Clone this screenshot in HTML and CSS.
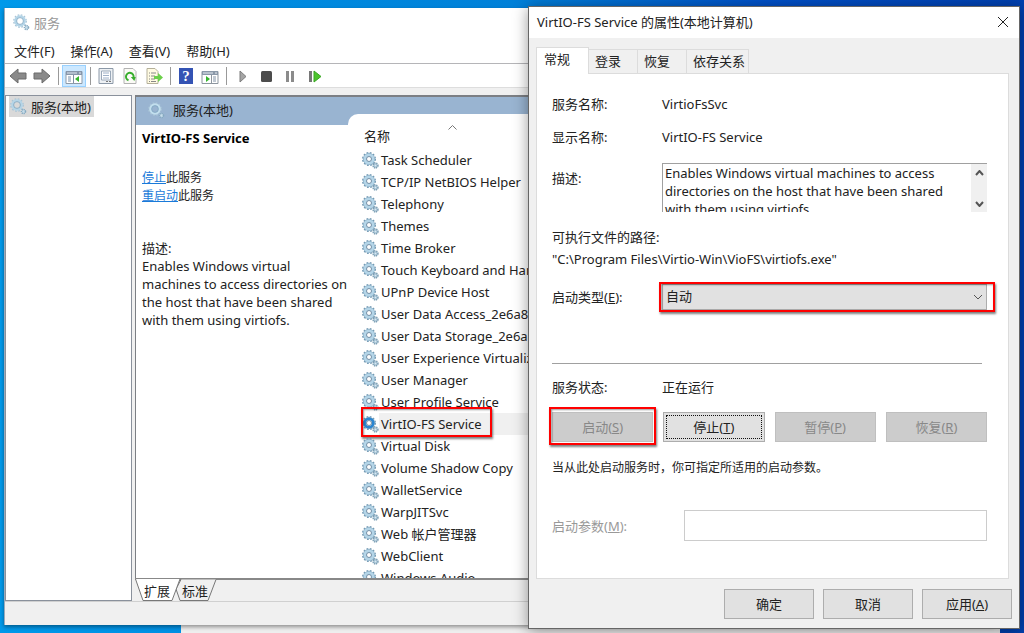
FILE: index.html
```
<!DOCTYPE html>
<html lang="zh-CN">

<head>
    <meta charset="UTF-8">
    <meta name="viewport" content="width=device-width, initial-scale=1.0">
    <title>服务</title>
    <link rel="stylesheet" href="styles.css">
</head>

<body>
    <!-- shared icons -->
    <svg class="sprite" aria-hidden="true">
        <symbol id="gear" viewBox="0 0 17 17">
            <circle cx="7" cy="7" r="6.3" fill="none" stroke="#7399b3" stroke-width="1.4" stroke-dasharray="1.8 1.5" />
            <circle cx="7" cy="7" r="4.5" fill="none" stroke="#7fa6bf" stroke-width="3" />
            <circle cx="7" cy="7" r="4.2" fill="none" stroke="currentColor" stroke-width="2.6" />
            <circle cx="7" cy="7" r="2.5" fill="#fff" stroke="#5c7f9c" stroke-width=".9" />
            <circle cx="13.500" cy="13.500" r="2.4" fill="none" stroke="#7c9fb5" stroke-width="1.6" stroke-dasharray="1.2 .6" />
            <circle cx="13.500" cy="13.500" r="1.4" fill="#d9e9f3" stroke="#8fb2c8" stroke-width="1" />
        </symbol>
        <symbol id="gear-pale" viewBox="0 0 17 17">
            <circle cx="7" cy="7" r="6.2" fill="none" stroke="#a8c4d6" stroke-width="1.4" stroke-dasharray="1.7 1.55" />
            <circle cx="7" cy="7" r="4.6" fill="none" stroke="currentColor" stroke-width="2.4" />
            <circle cx="7" cy="7" r="3.4" fill="none" stroke="#7fa6c0" stroke-width=".8" />
            <circle cx="13.500" cy="13.500" r="2" fill="#c9dfec" stroke="#85a9c0" stroke-width="1.6" stroke-dasharray="1.1 .6" />
        </symbol>
    </svg>

    <div class="desktop">
        <div class="back-window"></div>

        <div class="window services">
            <div class="title-bar">
                <svg class="gear"><use href="#gear-pale" /></svg>
                <span>服务</span>
            </div>
            <div class="menu-bar">
                <button>文件(F)</button>
                <button>操作(A)</button>
                <button>查看(V)</button>
                <button>帮助(H)</button>
            </div>
            <div class="toolbar">
                <button aria-label="后退"><svg viewBox="0 0 18 16"><path d="M1 8l8-7v4h8v6H9v4z" fill="#8a8a8a" stroke="#6a6a6a" /></svg></button>
                <button aria-label="前进"><svg viewBox="0 0 18 16"><path d="M17 8L9 1v4H1v6h8v4z" fill="#8a8a8a" stroke="#6a6a6a" /></svg></button>
                <i class="sep"></i>
                <button class="pressed" aria-label="显示控制台树">
                    <svg viewBox="0 0 18 16"><path d="M1 3.500h16v12H1z" fill="#fff" stroke="#8d9aa8" /><path d="M1 3h16v4H1z" fill="#8796aa" /><path d="M2 5h10M14 5h2" stroke="#dfe7f0" /><path d="M3 9h3M3 11h3M3 13h3" stroke="#7890aa" /><path d="M8.500 7v8" stroke="#8090a4" /><path d="M14 8v6l-4-3z" fill="#35b52c" /></svg>
                </button>
                <i class="sep"></i>
                <button aria-label="属性">
                    <svg viewBox="0 0 18 16"><path d="M2 .5h14v15H2z" fill="#eef1f4" stroke="#8c99a8" /><path d="M4.500 3h9v9h-9z" fill="#fff" stroke="#9aa8b8" /><path d="M6 5h6M6 7.500h6M6 10h6" stroke="#9fb1c8" /><path d="M9 13.500h2M12 13.500h2" stroke="#777" /></svg>
                </button>
                <button aria-label="刷新">
                    <svg viewBox="0 0 18 16"><path d="M3 .5h9l3 3v12H3z" fill="#fbfbf6" stroke="#b2b2b2" /><path d="M7.500 12.200A3.800 3.800 0 1 1 12.500 9.500" fill="none" stroke="#38ae2d" stroke-width="2" /><path d="M9.800 9h5l-1.500 4z" fill="#38ae2d" /></svg>
                </button>
                <button aria-label="导出列表">
                    <svg viewBox="0 0 18 16"><path d="M2 .5h8l3 3v12H2z" fill="#fffbe2" stroke="#b5b09a" /><path d="M4 5h1M6 5h5M4 8h1M6 8h4M4 11h1M6 11h4M4 13.500h1M6 13.500h5" stroke="#888" /><path d="M9 8h4V5l5 4.500-5 4.500v-3H9z" fill="#6cd04a" /></svg>
                </button>
                <i class="sep"></i>
                <button aria-label="帮助" class="help"><span>?</span></button>
                <button aria-label="操作窗格">
                    <svg viewBox="0 0 18 16"><path d="M1 3.500h16v12H1z" fill="#fff" stroke="#8d969f" /><path d="M1 3h16v4H1z" fill="#8a98a8" /><path d="M2 5h10M14 5h2" stroke="#e7edf3" /><path d="M12 9h3M12 11h3M12 13h3" stroke="#8293a6" /><path d="M10.500 7v8" stroke="#8d969f" /><path d="M5 8v6l4-3z" fill="#35b52c" /></svg>
                </button>
                <i class="sep"></i>
                <button aria-label="启动服务"><svg viewBox="0 0 18 16"><path d="M7 3v11l6-5.500z" fill="#a5a5a5" stroke="#7d7d7d" /></svg></button>
                <button aria-label="停止服务"><svg viewBox="0 0 18 16"><rect x="4" y="3" width="11" height="11" rx="1.500" fill="#4c4c4c" /></svg></button>
                <button aria-label="暂停服务"><svg viewBox="0 0 18 16"><path d="M5 3h3v11H5zM10 3h3v11h-3z" fill="#8b8b8b" /></svg></button>
                <button aria-label="重启动服务"><svg viewBox="0 0 18 16"><path d="M4 3h3v11H4z" fill="#777" /><path d="M9 3v11l7-5.500z" fill="#4cc42c" stroke="#38a522" /></svg></button>
            </div>

            <div class="panes">
                <div class="tree">
                    <div class="tree-item"><svg class="gear"><use href="#gear-pale" /></svg><span>服务(本地)</span></div>
                </div>
                <div class="detail">
                    <div class="detail-head"><svg class="gear"><use href="#gear-pale" /></svg><span>服务(本地)</span></div>
                    <div class="detail-body">
                        <div class="info">
                            <h2>VirtIO-FS Service</h2>
                            <p class="links"><a href="#">停止</a>此服务<br><a href="#">重启动</a>此服务</p>
                            <p class="about">描述:<br>Enables Windows virtual machines to access directories on the host that have been shared with them using virtiofs.</p>
                        </div>
                        <div class="list">
                            <div class="list-head">名称<svg class="sort" viewBox="0 0 9 5"><path d="M.5 4.500l4-4 4 4" /></svg></div>
                            <ul>
                                <li><svg class="gear"><use href="#gear" /></svg><span>Task Scheduler</span></li>
                                <li><svg class="gear"><use href="#gear" /></svg><span>TCP/IP NetBIOS Helper</span></li>
                                <li><svg class="gear"><use href="#gear" /></svg><span>Telephony</span></li>
                                <li><svg class="gear"><use href="#gear" /></svg><span>Themes</span></li>
                                <li><svg class="gear"><use href="#gear" /></svg><span>Time Broker</span></li>
                                <li><svg class="gear"><use href="#gear" /></svg><span>Touch Keyboard and Handwriting Panel Service</span></li>
                                <li><svg class="gear"><use href="#gear" /></svg><span>UPnP Device Host</span></li>
                                <li><svg class="gear"><use href="#gear" /></svg><span>User Data Access_2e6a8</span></li>
                                <li><svg class="gear"><use href="#gear" /></svg><span>User Data Storage_2e6a8</span></li>
                                <li><svg class="gear"><use href="#gear" /></svg><span>User Experience Virtualization Service</span></li>
                                <li><svg class="gear"><use href="#gear" /></svg><span>User Manager</span></li>
                                <li><svg class="gear"><use href="#gear" /></svg><span>User Profile Service</span></li>
                                <li class="selected"><svg class="gear"><use href="#gear" /></svg><span>VirtIO-FS Service</span><i class="mark"></i></li>
                                <li><svg class="gear"><use href="#gear" /></svg><span>Virtual Disk</span></li>
                                <li><svg class="gear"><use href="#gear" /></svg><span>Volume Shadow Copy</span></li>
                                <li><svg class="gear"><use href="#gear" /></svg><span>WalletService</span></li>
                                <li><svg class="gear"><use href="#gear" /></svg><span>WarpJITSvc</span></li>
                                <li><svg class="gear"><use href="#gear" /></svg><span>Web 帐户管理器</span></li>
                                <li><svg class="gear"><use href="#gear" /></svg><span>WebClient</span></li>
                                <li><svg class="gear"><use href="#gear" /></svg><span>Windows Audio</span></li>
                            </ul>
                        </div>
                    </div>
                    <div class="view-tabs">
                        <svg viewBox="0 0 84 22" aria-hidden="true">
                            <path d="M46 .5L41 10l4 11.500h28L81 .5" fill="#f0f0f0" stroke="#777" />
                            <path d="M.5 0L8 21.500h29L45 0" fill="#fff" stroke="#777" />
                        </svg>
                        <button>扩展</button>
                        <button>标准</button>
                    </div>
                </div>
            </div>
            <div class="status-bar"></div>
        </div>

        <form class="window dialog">
            <div class="title-bar">
                <span>VirtIO-FS Service 的属性(本地计算机)</span>
                <button type="button" class="close" aria-label="关闭"><svg viewBox="0 0 12 12"><path d="M1 1l10 10M11 1L1 11" /></svg></button>
            </div>
            <div class="tabs">
                <button type="button" class="active">常规</button>
                <button type="button">登录</button>
                <button type="button">恢复</button>
                <button type="button" class="wide">依存关系</button>
            </div>
            <div class="page">
                <div class="row"><span>服务名称:</span><span>VirtioFsSvc</span></div>
                <div class="row"><span>显示名称:</span><span>VirtIO-FS Service</span></div>
                <div class="row desc-row">
                    <label for="desc">描述:</label>
                    <div class="desc">
                        <textarea id="desc" readonly>Enables Windows virtual machines to access directories on the host that have been shared with them using virtiofs.</textarea>
                        <div class="scroll">
                            <svg viewBox="0 0 9 6"><path d="M1 5l3.500-4L8 5" /></svg>
                            <svg viewBox="0 0 9 6"><path d="M1 1l3.500 4L8 1" /></svg>
                        </div>
                    </div>
                </div>
                <div class="path">可执行文件的路径:<br>"C:\Program Files\Virtio-Win\VioFS\virtiofs.exe"</div>
                <div class="row type-row">
                    <label for="type">启动类型(<u>E</u>):</label>
                    <div class="select">
                        <select id="type">
                            <option>自动</option>
                            <option>手动</option>
                            <option>禁用</option>
                        </select>
                        <svg viewBox="0 0 10 6"><path d="M1 1l4 4 4-4" /></svg>
                        <i class="mark"></i>
                    </div>
                </div>
                <hr>
                <div class="row"><span>服务状态:</span><span>正在运行</span></div>
                <div class="actions">
                    <div class="marked"><button type="button" disabled>启动(<u>S</u>)</button><i class="mark"></i></div>
                    <button type="button" class="focused">停止(<u>T</u>)</button>
                    <button type="button" disabled>暂停(<u>P</u>)</button>
                    <button type="button" disabled>恢复(<u>R</u>)</button>
                </div>
                <p>当从此处启动服务时，你可指定所适用的启动参数。</p>
                <div class="row param-row">
                    <label for="param">启动参数(<u>M</u>):</label>
                    <input type="text" id="param" disabled>
                </div>
            </div>
            <div class="footer">
                <button type="button">确定</button>
                <button type="button">取消</button>
                <button type="button">应用(<u>A</u>)</button>
            </div>
        </form>
    </div>
</body>

</html>
```
FILE: styles.css
```
* {
    box-sizing: border-box;
}

body {
    margin: 0;
    font-family: "Noto Sans", "Noto Sans CJK SC", sans-serif;
    font-size: 13px;
    line-height: 18px;
    color: #222;
}

button,
select,
input,
textarea {
    font: inherit;
    color: inherit;
}

button {
    padding: 0;
    border: none;
    background: none;
}

.sprite {
    display: none;
}

.gear {
    flex: none;
    width: 17px;
    height: 17px;
    color: #b4d5e8;
}

.desktop {
    position: relative;
    height: 100vh;
    overflow: hidden;
    background: linear-gradient(90deg, #0099ea 0%, #0080d8 50%, #0050c8 75%, #0040b0 100%);
}

.back-window {
    position: absolute;
    left: 181px;
    right: 24px;
    bottom: 0;
    height: 10px;
    background: #eee;
}

.window {
    position: absolute;
    display: flex;
    flex-direction: column;
}

/* services console */
.services {
    left: 4px;
    right: 30px;
    top: 8px;
    bottom: 8px;
    background: #f0f0f0;
    border-left: 1px solid #9ab;
    box-shadow: 0 2px 4px rgba(0, 0, 0, .4);
}

.services .title-bar {
    display: flex;
    align-items: center;
    gap: 4px;
    height: 29px;
    padding-left: 8px;
    background: #fff;
    color: #999;
}

.menu-bar {
    display: flex;
    gap: 16px;
    height: 27px;
    padding: 1px 0 0 9px;
    background: #fff;
    border-bottom: 1px solid #b5b5b8;
}

.toolbar {
    display: flex;
    align-items: center;
    height: 24px;
    padding-left: 1px;
    background: #fff;
    border-bottom: 1px solid #ddd;
}

.toolbar button {
    display: flex;
    align-items: center;
    justify-content: center;
    width: 24px;
    height: 22px;
}

.toolbar svg {
    width: 18px;
    height: 16px;
}

.toolbar .pressed {
    background: #cce8ff;
    border: 1px solid #99d1ff;
}

.toolbar .help span {
    width: 14px;
    height: 16px;
    background: #3453b4;
    color: #fff;
    font-family: "Liberation Serif", serif;
    font-size: 15px;
    font-weight: bold;
    line-height: 16px;
}

.sep {
    width: 1px;
    height: 18px;
    margin: 0 3px 0 4px;
    background: #999;
}

.panes {
    flex: 1;
    display: flex;
    gap: 3px;
    min-height: 0;
    padding-top: 7px;
}

.tree {
    width: 127px;
    padding: 0 3px;
    background: #fff;
    border: 1px solid #8a919c;
}

.tree-item {
    display: inline-flex;
    align-items: center;
    gap: 4px;
    height: 21px;
    padding: 0 3px 0 1px;
    background: #d9d9d9;
}

.detail {
    flex: 1;
    display: flex;
    flex-direction: column;
    min-width: 0;
}

.detail-head {
    display: flex;
    align-items: center;
    gap: 8px;
    height: 30px;
    padding: 0 0 2px 12px;
    background: #99b4d1;
    border-top: 2px solid #7c7f84;
    border-left: 1px solid #7c7f84;
}

.detail-head .gear {
    color: #c2dfee;
}

.detail-body {
    flex: 1;
    display: flex;
    min-height: 0;
    background: #fff;
    border-left: 1px solid #7c7f84;
}

.info {
    width: 212px;
    padding: 4px 0 0 6px;
}

.info h2 {
    margin: 0 0 22px;
    font-size: 13px;
    color: #000;
}

.info p {
    margin: 0;
}

.info .links {
    font-size: 12px;
}

.info a {
    color: #1a7ad9;
}

.info .about {
    margin-top: 34px;
}

/* the list rises over the blue header with a rounded corner */
.list {
    flex: 1;
    min-width: 0;
    margin-top: -11px;
    padding-left: 14px;
    background: #fff;
    border-top-left-radius: 10px;
    overflow: hidden;
}

.list-head {
    display: flex;
    height: 35px;
    padding: 13px 0 0 2px;
}

.sort {
    width: 9px;
    height: 5px;
    margin: -2px 0 0 58px;
    fill: none;
    stroke: #777;
}

.list ul {
    margin: 0;
    padding: 0;
    list-style: none;
}

.list li {
    position: relative;
    display: flex;
    align-items: center;
    gap: 2px;
    height: 22px;
    white-space: nowrap;
}

.list .selected {
    background: linear-gradient(90deg, #fff 17px, #f0f0f0 17px);
}

.list .selected .gear {
    color: #2a86d2;
}

.mark {
    position: absolute;
    border: 2px solid #f00;
    box-shadow: 1px 2px 2px rgba(0, 0, 0, .5), inset 1px 1px 2px rgba(0, 0, 0, .4);
    pointer-events: none;
}

.list .mark {
    left: -1px;
    top: -6px;
    width: 131px;
    height: 30px;
}

.view-tabs {
    position: relative;
    display: flex;
    gap: 12px;
    height: 23px;
    padding: 2px 0 0 9px;
    border-top: 2px solid #888;
}

.view-tabs svg {
    position: absolute;
    left: 0;
    top: -1px;
    width: 84px;
    height: 22px;
}

.view-tabs button {
    position: relative;
    height: 18px;
}

.status-bar {
    height: 24px;
    border-top: 1px solid #d0d0d0;
}

/* properties dialog */
.dialog {
    left: 528px;
    right: 4px;
    top: 6px;
    bottom: 4px;
    background: #f0f0f0;
    border: 1px solid #666;
    box-shadow: 0 2px 14px rgba(0, 0, 0, .4);
}

.dialog .title-bar {
    display: flex;
    align-items: center;
    justify-content: space-between;
    height: 31px;
    padding: 0 10px 2px 8px;
    background: #fff;
}

.close {
    display: flex;
}

.close svg {
    width: 12px;
    height: 12px;
    fill: none;
    stroke: #222;
}

.tabs {
    display: flex;
    align-items: flex-end;
    height: 35px;
    padding-left: 7px;
}

.tabs button {
    width: 49px;
    height: 24px;
    padding: 0 0 1px 6px;
    border: 1px solid #dcdcdc;
    border-left: none;
    border-bottom: none;
    text-align: left;
}

.tabs .active {
    position: relative;
    width: 53px;
    height: 27px;
    margin-bottom: -1px;
    padding: 0 0 4px 7px;
    background: #fff;
    border-left: 1px solid #dcdcdc;
}

.tabs .wide {
    width: 62px;
}

.page {
    flex: 1;
    margin: 0 10px 0 7px;
    padding: 21px 21px 0 15px;
    background: #fff;
    border: 1px solid #dcdcdc;
}

.row {
    display: grid;
    grid-template-columns: 110px 1fr;
    align-items: center;
    margin-bottom: 15px;
}

.desc-row {
    height: 50px;
    margin: 16px 0 14px;
}

.desc-row label {
    align-self: start;
    padding-top: 7px;
}

.desc {
    display: flex;
    height: 49px;
    border-top: 1px solid #a0a0a0;
    border-left: 1px solid #a0a0a0;
}

.desc textarea {
    flex: 1;
    min-width: 0;
    padding: 0 2px;
    border: none;
    resize: none;
    overflow: hidden;
    outline: none;
}

.scroll {
    display: flex;
    flex-direction: column;
    align-items: center;
    justify-content: space-between;
    width: 16px;
    padding: 6px 0 5px;
    background: #f0f0f0;
}

.scroll svg {
    width: 9px;
    height: 6px;
    fill: none;
    stroke: #555;
    stroke-width: 2;
}

.path {
    line-height: 22px;
    margin-bottom: 14px;
}

.type-row {
    margin-bottom: 53px;
}

.select {
    position: relative;
}

.select select {
    display: block;
    width: 100%;
    height: 26px;
    padding: 0 3px 2px;
    background: #e1e1e1;
    border: 1px solid #adadad;
    border-radius: 0;
    appearance: none;
}

.select svg {
    position: absolute;
    right: 4px;
    top: 10px;
    width: 10px;
    height: 6px;
    fill: none;
    stroke: #555;
}

.select .mark {
    inset: -2px -8px -2px -3px;
}

hr {
    margin: 0 5px 14px 0;
    border: none;
    border-top: 1px solid #a0a0a0;
}

.actions {
    display: grid;
    grid-template-columns: repeat(4, 1fr);
    gap: 10px;
    padding-top: 1px;
}

.actions button,
.footer button {
    height: 30px;
    background: #e1e1e1;
    border: 1px solid #adadad;
}

.actions button:disabled {
    background: #ccc;
    border-color: #bfbfbf;
    color: #888;
}

.actions .focused {
    outline: 1px dotted #111;
    outline-offset: -4px;
}

.marked {
    position: relative;
}

.marked button {
    width: 100%;
}

.marked .mark {
    inset: -5px -3px -3px -3px;
}

.page p {
    margin: 17px 0 33px;
    font-size: 12px;
}

.param-row {
    grid-template-columns: 132px 1fr;
    color: #999;
}

.param-row input {
    width: 100%;
    height: 31px;
    background: #fff;
    border: 1px solid #ccc;
}

.footer {
    display: flex;
    justify-content: flex-end;
    gap: 9px;
    padding: 10px 7px 9px;
}

.footer button {
    width: 90px;
}
```
